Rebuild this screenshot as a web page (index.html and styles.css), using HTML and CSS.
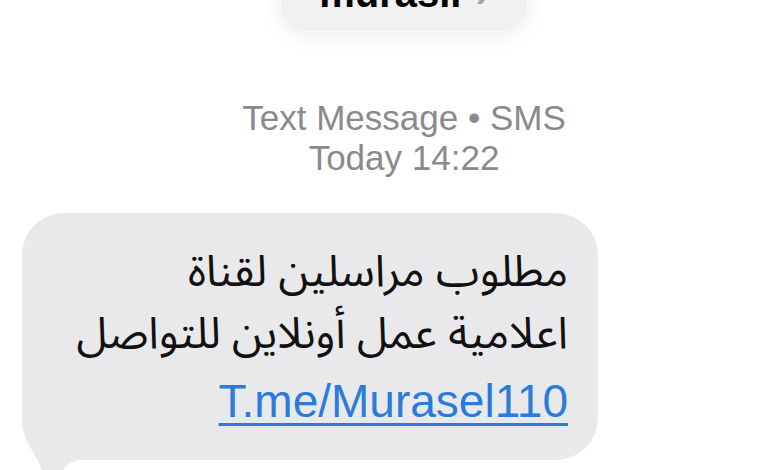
FILE: index.html
```html
<!DOCTYPE html>
<html lang="en">

<head>
    <meta charset="utf-8">
    <meta content="width=device-width, initial-scale=1.0" name="viewport">
    <title>Messages</title>
    <link rel="stylesheet" href="styles.css">
</head>

<body>

    <div class="screen">
        <!-- contact pill, scrolled mostly off the top -->
        <div class="contact">
            <span class="name">murasil</span>
            <span class="chev">›</span>
        </div>

        <div class="meta">
            <div>Text Message • SMS</div>
            <div>Today 14:22</div>
        </div>

        <!-- incoming message -->
        <div class="bubble">
            <p class="msg" dir="rtl">مطلوب مراسلين لقناة<br>اعلامية عمل أونلاين للتواصل</p>
            <a class="link" href="#">T.me/Murasel110</a>
            <svg class="tail" width="60" height="70" viewBox="0 0 60 70">
                <path d="M0,0 L0,12 C2,35 16,45 22,65 L38,70 C40,60 44,52 58,50 L58,0 Z" fill="#e9e9eb" />
            </svg>
        </div>
    </div>

</body>

</html>
```

FILE: styles.css
```css
body {
    margin: 0;
    padding: 0;
    background: #fff;
    font-family: "Liberation Sans", Arial, sans-serif;
}

.screen {
    width: 780px;
    height: 470px;
    overflow: hidden;
    display: flex;
    flex-direction: column;
}

.contact {
    width: 248px;
    height: 70px;
    margin: -38px 0 0 280px;
    box-sizing: border-box;
    border-radius: 28px;
    background: #f1f1f1;
    border: 1px solid #fafafa;
    box-shadow: 0 4px 20px rgba(0, 0, 0, 0.08);
    display: flex;
    align-items: flex-end;
    justify-content: center;
    gap: 14px;
    padding-bottom: 18px;
}

.name {
    font-size: 40px;
    font-weight: bold;
    color: #000;
    line-height: 1;
}

.chev {
    font-size: 40px;
    font-weight: bold;
    color: #a5a5a9;
    line-height: 1;
}

.meta {
    margin: 66px 0 0 28px;
    text-align: center;
    font-size: 35px;
    line-height: 40px;
    color: #8a8a8e;
}

.bubble {
    position: relative;
    margin: 35px 0 0 22px;
    width: 576px;
    height: 247px;
    box-sizing: border-box;
    padding: 28px 30px 0 0;
    background: #e9e9eb;
    border-radius: 42px;
    display: flex;
    flex-direction: column;
    align-items: flex-end;
}

.msg {
    margin: 0;
    font-family: "Noto Sans Arabic", "DejaVu Sans", sans-serif;
    font-size: 44px;
    line-height: 62px;
    color: #111;
    text-align: right;
}

.link {
    margin-top: 10px;
    font-size: 46px;
    line-height: 52px;
    color: #2a7bdc;
    text-decoration: underline;
    text-decoration-thickness: 3px;
    text-underline-offset: 6px;
}

.tail {
    position: absolute;
    left: 0;
    top: 197px;
}
```
